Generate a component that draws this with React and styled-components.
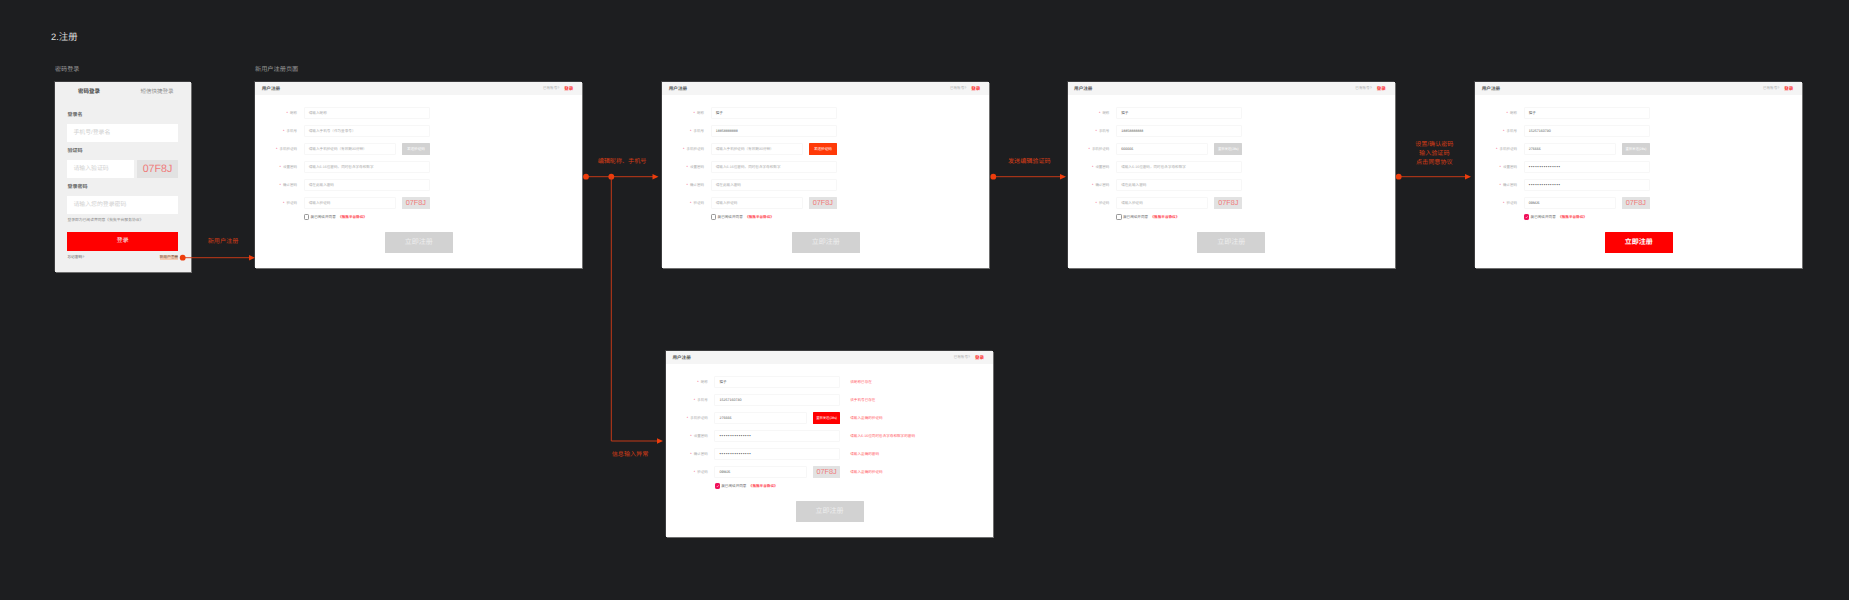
import React from 'react';
import styled, { createGlobalStyle } from 'styled-components';

const GlobalStyle = createGlobalStyle`
  html, body {
    margin: 0;
    background: #1d1e20;
  }
  * {
    box-sizing: border-box;
  }
`;

const FONT = '"Liberation Sans", "Noto Sans CJK SC", sans-serif';
const ORANGE = '#ee3d0c';

const Canvas = styled.div`
  position: relative;
  width: 1849px;
  height: 600px;
  overflow: hidden;
  background: #1d1e20;
  font-family: ${FONT};
  text-rendering: geometricPrecision;
`;

const Wires = styled.svg`
  position: absolute;
  left: 0;
  top: 0;
  z-index: 2;
`;

const Caption = styled.div`
  position: absolute;
  left: ${(p) => p.$x}px;
  top: ${(p) => p.$y - 6}px;
  line-height: 12px;
  font-size: ${(p) => p.$size}px;
  color: ${(p) => p.$color};
  white-space: nowrap;
`;

const Note = styled.div`
  position: absolute;
  left: ${(p) => p.$x}px;
  top: ${(p) => p.$y}px;
  width: 60px;
  margin-left: -30px;
  text-align: center;
  font-size: 6.1px;
  line-height: 8.8px;
  color: #d63c16;
  white-space: pre-line;
`;

const Sheet = styled.div`
  position: absolute;
  left: ${(p) => p.$x}px;
  top: ${(p) => p.$y}px;
  width: ${(p) => p.$w}px;
  height: ${(p) => p.$h}px;
  background: ${(p) => p.$bg};
  box-shadow: -1px -1px 0 #3c3c3e, 1px 1px 0 #6e6e6e;
`;

/* login card */
const Tabs = styled.div`
  display: flex;
  height: 18px;
`;

const Tab = styled.div`
  flex: 1;
  display: flex;
  align-items: center;
  justify-content: center;
  padding-top: 0.5px;
  font-size: 5.5px;
  font-weight: ${(p) => (p.$active ? 700 : 400)};
  color: ${(p) => (p.$active ? '#444' : '#8a8a8a')};
`;

const LoginBody = styled.div`
  padding: 12px 13px 0 12.4px;
`;

const LoginGroup = styled.div`
  margin-bottom: 6px;
`;

const LoginLabel = styled.div`
  height: 6px;
  line-height: 6px;
  margin-bottom: 6px;
  font-size: 5px;
  font-weight: 700;
  color: #666;
`;

const LoginRow = styled.div`
  display: flex;
  gap: 3.5px;
`;

const LoginInput = styled.div`
  flex: 1;
  height: 18px;
  line-height: 18px;
  padding-left: 6px;
  background: #fff;
  font-size: 5.9px;
  color: #cfcfcf;
`;

const Captcha = styled.div`
  width: ${(p) => p.$w}px;
  height: ${(p) => p.$h}px;
  line-height: ${(p) => p.$h}px;
  flex: none;
  text-align: center;
  background: #e2e2e2;
  border-radius: 0.5px;
  font-size: ${(p) => p.$size}px;
  color: #f07a7a;
`;

const LoginAgree = styled.div`
  height: 5px;
  line-height: 5px;
  margin-top: -2px;
  font-size: 3.8px;
  color: #888;
`;

const LoginButton = styled.div`
  height: 19px;
  line-height: 19px;
  margin-top: 9px;
  text-align: center;
  background: #ff0000;
  font-size: 5.9px;
  color: #f6f6f6;
`;

const LoginFoot = styled.div`
  display: flex;
  justify-content: space-between;
  height: 5px;
  line-height: 5px;
  margin-top: 4px;
  font-size: 3.7px;
  color: #555;
`;

const NewUser = styled.span`
  background: #f3cdb6;
  color: #6a4a3a;
`;

/* register card */
const Header = styled.div`
  display: flex;
  align-items: center;
  justify-content: space-between;
  height: 13px;
  padding: 0 9px 0 6.4px;
  background: #f5f5f5;
`;

const Title = styled.div`
  font-size: 4.6px;
  font-weight: 700;
  color: #555;
`;

const HeaderSide = styled.div`
  display: flex;
  align-items: center;
  gap: 5px;
  font-size: 3.6px;
  color: #aaa;
`;

const HeaderLink = styled.span`
  font-size: 4.5px;
  font-weight: 700;
  color: #ff2a2a;
`;

const Form = styled.div`
  display: flex;
  flex-direction: column;
  gap: 6px;
  padding-top: 12px;
`;

const Row = styled.div`
  display: flex;
  align-items: center;
  height: 12px;
`;

const RowLabel = styled.div`
  width: 41.7px;
  margin-right: 6.8px;
  flex: none;
  text-align: right;
  font-size: 3.5px;
  color: #aaa;
`;

const Star = styled.span`
  margin-right: 2px;
  color: #f0406a;
`;

const FieldLine = styled.div`
  display: flex;
  gap: 6.2px;
  width: 126px;
  flex: none;
`;

const Field = styled.div`
  flex: 1;
  height: 12px;
  line-height: 10px;
  padding-left: 4px;
  border: 1px solid #f7f7f7;
  border-radius: 1px;
  font-size: ${(p) => (p.$secret ? 4 : 3.6)}px;
  color: ${(p) => (p.$filled ? (p.$secret ? '#333' : '#555') : '#aaa')};
  white-space: nowrap;
  overflow: hidden;
  letter-spacing: ${(p) => (p.$secret ? '0.73px' : '0')};
`;

const SmsButton = styled.div`
  width: 27.8px;
  height: 12px;
  line-height: 12px;
  flex: none;
  text-align: center;
  border-radius: 0.5px;
  background: ${(p) => p.$bg};
  font-size: ${(p) => p.$size}px;
  color: #fff;
  white-space: nowrap;
`;

const Problem = styled.div`
  margin-left: 9.8px;
  font-size: 3.6px;
  color: #ff5a64;
  white-space: nowrap;
`;

const AgreeRow = styled.div`
  display: flex;
  align-items: center;
  height: 6px;
  margin: 5px 0 0 48.5px;
  font-size: 3.6px;
  color: #666;
`;

const Tick = styled.div`
  width: 5.4px;
  height: 5.4px;
  margin-right: 1.4px;
  display: flex;
  align-items: center;
  justify-content: center;
  border: 0.5px solid ${(p) => (p.$on ? '#f0105a' : '#999')};
  border-radius: 1.2px;
  background: ${(p) => (p.$on ? '#f0105a' : '#fff')};
`;

const Terms = styled.span`
  margin-left: 2.4px;
  font-weight: 700;
  color: #ff3040;
`;

const SubmitWrap = styled.div`
  display: flex;
  justify-content: center;
  margin-top: 12px;
`;

const Submit = styled.div`
  width: 68px;
  height: 21px;
  line-height: 21px;
  text-align: center;
  border-radius: 0.5px;
  background: ${(p) => (p.$on ? '#ff0000' : '#d2d2d2')};
  font-size: 7px;
  font-weight: ${(p) => (p.$on ? 700 : 400)};
  color: ${(p) => (p.$on ? '#fff' : '#eeeeee')};
`;

const GRAY = '#d2d2d2';
const DOTS = '•••••••••••••••';

const PLACEHOLDERS = {
  name: '请输入昵称',
  phone: '请输入手机号（作为登录号）',
  sms: '请输入手机验证码（有效期30分钟）',
  pwd: '请输入6-16位密码，同时包含字母和数字',
  again: '请在此输入密码',
  code: '请输入验证码',
};

const LABELS = {
  name: '昵称',
  phone: '手机号',
  sms: '手机验证码',
  pwd: '设置密码',
  again: '确认密码',
  code: '验证码',
};

const SHEETS = [
  { x: 255.3, y: 82, values: {}, sms: { text: '发送验证码', bg: GRAY, size: 3.6 } },
  {
    x: 662.3,
    y: 82,
    values: { name: '猫子', phone: '18858888888' },
    sms: { text: '发送验证码', bg: '#ff3a08', size: 3.6 },
  },
  {
    x: 1067.7,
    y: 82,
    values: { name: '猫子', phone: '18858888888', sms: '666666' },
    sms: { text: '重新发送(28s)', bg: GRAY, size: 3.3 },
  },
  {
    x: 1475.3,
    y: 82,
    values: { name: '猫子', phone: '15257160730', sms: '276666', pwd: DOTS, again: DOTS, code: '09MJ6' },
    sms: { text: '重新发送(28s)', bg: GRAY, size: 3.3 },
    agreed: true,
    ready: true,
  },
  {
    x: 666,
    y: 351,
    values: { name: '猫子', phone: '15257160730', sms: '276666', pwd: DOTS, again: DOTS, code: '09MJ6' },
    sms: { text: '重新发送(28s)', bg: '#ff0000', size: 3.3 },
    agreed: true,
    errors: {
      name: '该昵称已存在',
      phone: '该手机号已存在',
      sms: '请输入正确的验证码',
      pwd: '请输入6-16位同时包含字母和数字的密码',
      again: '请输入正确的密码',
      code: '请输入正确的验证码',
    },
  },
];

function FormField({ id, sheet }) {
  const value = sheet.values[id];
  return (
    <Field $filled={!!value} $secret={value === DOTS}>
      {value || PLACEHOLDERS[id]}
    </Field>
  );
}

function RegisterSheet({ sheet }) {
  return (
    <Sheet $x={sheet.x} $y={sheet.y} $w={327} $h={186} $bg="#fff">
      <Header>
        <Title>用户注册</Title>
        <HeaderSide>
          已有账号?
          <HeaderLink>登录</HeaderLink>
        </HeaderSide>
      </Header>
      <Form>
        {Object.keys(LABELS).map((id) => (
          <Row key={id}>
            <RowLabel>
              <Star>*</Star>
              {LABELS[id]}
            </RowLabel>
            <FieldLine>
              <FormField id={id} sheet={sheet} />
              {id === 'sms' && (
                <SmsButton $bg={sheet.sms.bg} $size={sheet.sms.size}>
                  {sheet.sms.text}
                </SmsButton>
              )}
              {id === 'code' && (
                <Captcha $w={27.8} $h={12} $size={7.3}>
                  07F8J
                </Captcha>
              )}
            </FieldLine>
            {sheet.errors && <Problem>{sheet.errors[id]}</Problem>}
          </Row>
        ))}
      </Form>
      <AgreeRow>
        <Tick $on={sheet.agreed}>
          {sheet.agreed && (
            <svg width="4" height="4" viewBox="0 0 10 10">
              <path d="M2 5.2 L4.2 7.4 L8.2 2.8" fill="none" stroke="#fff" strokeWidth="1.6" />
            </svg>
          )}
        </Tick>
        我已阅读并同意
        <Terms>《批批平台协议》</Terms>
      </AgreeRow>
      <SubmitWrap>
        <Submit $on={sheet.ready}>立即注册</Submit>
      </SubmitWrap>
    </Sheet>
  );
}

function LoginSheet() {
  return (
    <Sheet $x={55} $y={82} $w={136} $h={190} $bg="#f0f0f0">
      <Tabs>
        <Tab $active>密码登录</Tab>
        <Tab>短信快捷登录</Tab>
      </Tabs>
      <LoginBody>
        <LoginGroup>
          <LoginLabel>登录名</LoginLabel>
          <LoginInput>手机号/登录名</LoginInput>
        </LoginGroup>
        <LoginGroup>
          <LoginLabel>验证码</LoginLabel>
          <LoginRow>
            <LoginInput>请输入验证码</LoginInput>
            <Captcha $w={41} $h={18} $size={10.7}>
              07F8J
            </Captcha>
          </LoginRow>
        </LoginGroup>
        <LoginGroup>
          <LoginLabel>登录密码</LoginLabel>
          <LoginInput>请输入您的登录密码</LoginInput>
        </LoginGroup>
        <LoginAgree>登录即为已阅读并同意《批批平台服务协议》</LoginAgree>
        <LoginButton>登录</LoginButton>
        <LoginFoot>
          <span>忘记密码?</span>
          <NewUser>新用户注册</NewUser>
        </LoginFoot>
      </LoginBody>
    </Sheet>
  );
}

// straight wires of the flow chart: start dot, line, arrow head
function Wire({ x1, x2, y }) {
  return (
    <>
      <line x1={x1} y1={y} x2={x2 - 4} y2={y} stroke="#d63c16" strokeWidth="0.9" />
      <circle cx={x1} cy={y} r="2.9" fill={ORANGE} />
      <polygon points={`${x2 - 6},${y - 2.8} ${x2},${y} ${x2 - 6},${y + 2.8}`} fill={ORANGE} />
    </>
  );
}

export default function App() {
  return (
    <Canvas>
      <GlobalStyle />
      <Caption $x={51} $y={37.3} $size={9.4} $color="#dedede">
        2.注册
      </Caption>
      <Caption $x={55} $y={69.5} $size={6.1} $color="#9a9a9a">
        密码登录
      </Caption>
      <Caption $x={255} $y={69.5} $size={6.2} $color="#9a9a9a">
        新用户注册页面
      </Caption>

      <LoginSheet />
      {SHEETS.map((sheet) => (
        <RegisterSheet key={sheet.x} sheet={sheet} />
      ))}

      <Wires width="1849" height="600">
        <Wire x1={182.7} x2={255} y={257.7} />
        <Wire x1={586} x2={658.5} y={176.7} />
        <Wire x1={993.3} x2={1066} y={176.7} />
        <Wire x1={1398.7} x2={1471} y={176.7} />
        <circle cx="611.3" cy="176.7" r="2.9" fill={ORANGE} />
        <path d="M611.3 176.7 V441 H658" fill="none" stroke="#d63c16" strokeWidth="0.9" />
        <polygon points="657,438.2 663,441 657,443.8" fill={ORANGE} />
      </Wires>

      <Note $x={223} $y={238.3}>新用户注册</Note>
      <Note $x={622} $y={158.3}>编辑昵称、手机号</Note>
      <Note $x={1029.3} $y={158.3}>发送编辑验证码</Note>
      <Note $x={1434.3} $y={141}>{'设置/确认密码\n输入验证码\n点击同意协议'}</Note>
      <Note $x={630} $y={451}>信息输入异常</Note>
    </Canvas>
  );
}
